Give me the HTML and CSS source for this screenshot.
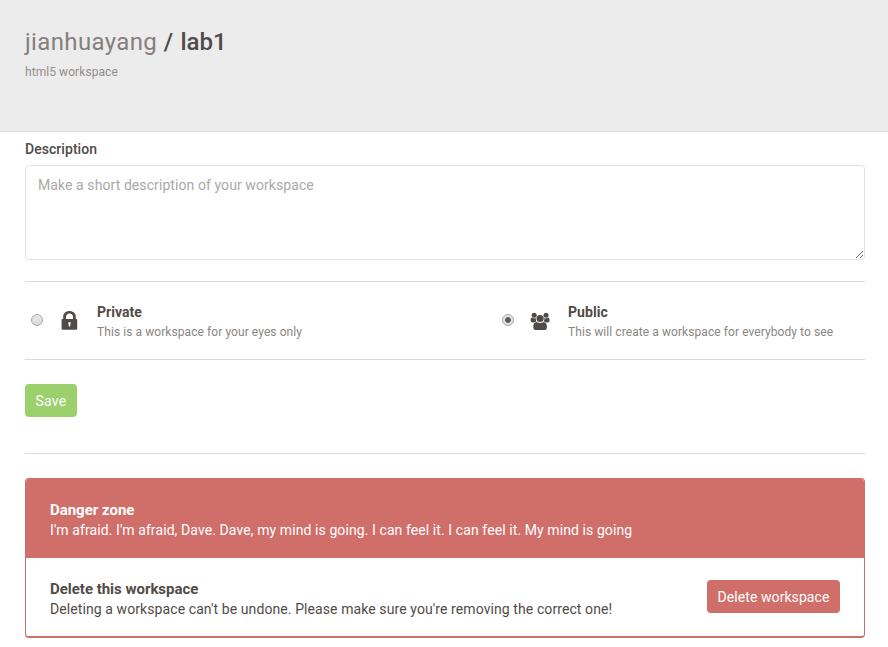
FILE: index.html
```html
<!DOCTYPE html>
<html lang="en">
<head>
<meta charset="utf-8">
<title>jianhuayang / lab1</title>
<link rel="stylesheet" href="styles.css">
</head>
<body>
<header class="page-header">
  <h1 class="title"><span class="owner">jianhuayang</span><span class="slash"> / </span>lab1</h1>
  <p class="subtitle">html5 workspace</p>
</header>
<main class="content">
  <label class="field-label" for="description">Description</label>
  <textarea class="description" id="description" placeholder="Make a short description of your workspace"></textarea>
  <div class="visibility">
    <label class="option">
      <input class="radio" type="radio" name="visibility">
      <svg class="icon" viewBox="0 0 20 20"><path fill-rule="evenodd" d="M2 9h1.200V6.500C3.200 3.200 5.900 .9 9.500 .9s6.300 2.300 6.300 5.600V9H16.200q1 0 1 1v8.700q0 1-1 1H2.600q-1 0-1-1V9.800Q1.600 9 2 9zM6 9h7V6.700C13 4.900 11.500 3.500 9.500 3.500S6 4.900 6 6.700zM9.500 12a1.300 1.300 0 0 0-.8 2.300v2.300h1.600v-2.300a1.300 1.300 0 0 0-.8-2.300z"/></svg>
      <span class="option-text"><strong class="option-name">Private</strong><span class="option-hint">This is a workspace for your eyes only</span></span>
    </label>
    <label class="option">
      <input class="radio" type="radio" name="visibility" checked>
      <svg class="icon people" viewBox="0 0 20 20"><circle cx="4.200" cy="4.300" r="2.500"/><circle cx="16" cy="4.300" r="2.500"/><path d="M.6 9.300Q.6 6.500 2 6.600q1.800 1.300 3.900.5-.3 1.800.5 3.300-1.500.2-2.400 1.100H2.500Q.6 11.500 .6 9.300zM19.600 9.300Q19.600 6.500 18.200 6.600q-1.800 1.300-3.900.5.3 1.800-.5 3.300 1.500.2 2.400 1.100h1.500q1.900 0 1.900-2.200z"/><circle cx="10.100" cy="7.500" r="3.600"/><path d="M6.500 10.900q3.600 2.300 7.200 0 3.400.4 3.200 5.300 0 2.800-2.700 2.800H6q-2.700 0-2.700-2.800-.2-4.900 3.200-5.300z"/></svg>
      <span class="option-text"><strong class="option-name">Public</strong><span class="option-hint">This will create a workspace for everybody to see</span></span>
    </label>
  </div>
  <div class="actions"><button class="button save" type="button">Save</button></div>
  <section class="danger">
    <div class="danger-head"><strong class="danger-title">Danger zone</strong><p>I'm afraid. I'm afraid, Dave. Dave, my mind is going. I can feel it. I can feel it. My mind is going</p></div>
    <div class="danger-body">
      <div class="danger-text"><strong class="danger-title">Delete this workspace</strong><p>Deleting a workspace can't be undone. Please make sure you're removing the correct one!</p></div>
      <button class="button delete" type="button">Delete workspace</button>
    </div>
  </section>
</main>
</body>
</html>
```
FILE: styles.css
```css
* { box-sizing: border-box; }
body { margin: 0; background: #fff; color: #504b47; font: 14px/20px Roboto, sans-serif; }
p { margin: 0; }
strong { display: block; font-weight: 700; }
.page-header { height: 132px; padding: 26px 25px 0; background: #ececec; border-bottom: 1px solid #dbdbdb; }
.title { margin: 0; font-size: 24px; line-height: 32px; font-weight: 500; letter-spacing: -.05px; }
.owner { color: #85807c; font-weight: 400; letter-spacing: .36px; }
.slash { letter-spacing: .7px; }
.subtitle { margin-top: 4px; font-size: 12px; letter-spacing: .07px; color: #938e8a; }
.content { padding: 7px 23px 0 25px; }
.field-label { display: block; font-weight: 500; letter-spacing: .05px; }
.description { display: block; width: 100%; height: 95px; margin-top: 6px; padding: 9px 12px; border: 1px solid #e2e2e2; border-radius: 4px; font: inherit; letter-spacing: .08px; resize: vertical; outline: none; }
.description::placeholder { color: #a9a9a9; }
.visibility { display: grid; grid-template-columns: 471px 1fr; height: 79px; margin-top: 21px; border: solid #dbdbdb; border-width: 1px 0; }
.option { display: flex; align-items: flex-start; padding: 20px 0 0 6px; }
.radio { appearance: none; flex: none; width: 12px; height: 12px; margin: 12px 17px 0 0; border: 1px solid #a9a9a9; border-radius: 50%; background: linear-gradient(#e9e9e9, #d9d9d9); }
.radio:checked { background: radial-gradient(circle, #5b5b5b 0 2.500px, #e3e3e3 3.300px); }
.icon { flex: none; width: 20px; height: 20px; margin: 8px 17px 0 0; fill: #504b47; }
.people { margin: 9px 18px 0 -1px; }
.option-name { font-size: 14px; letter-spacing: .05px; }
.option-hint { display: block; font-size: 12px; letter-spacing: .075px; color: #8a8683; }
.actions { height: 94px; padding-top: 24px; border-bottom: 1px solid #dbdbdb; }
.button { height: 33px; padding: 0 10px; border: 0; border-radius: 4px; color: #fff; font: inherit; letter-spacing: .07px; }
.save { width: 52px; letter-spacing: .25px; background: #9cd06c; }
.delete { width: 133px; margin-top: -1px; background: #d06e6a; }
.danger { height: 160px; margin-top: 24px; border: 1px solid #d06e6a; border-bottom-width: 2px; border-radius: 4px; overflow: hidden; letter-spacing: .09px; }
.danger-title { font-size: 15px; letter-spacing: -.02px; }
.danger-head { height: 79px; padding: 21px 24px 0; background: #d06e6a; color: #fff; }
.danger-body { display: flex; justify-content: space-between; align-items: center; height: 78px; padding: 0 24px; }
.danger-text { padding-top: 3px; }
```
